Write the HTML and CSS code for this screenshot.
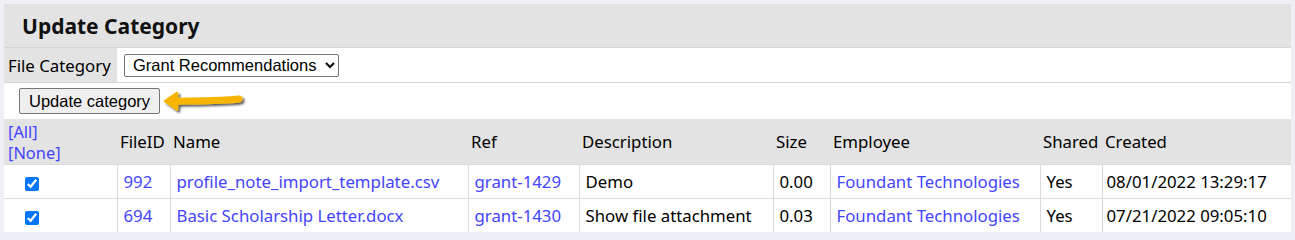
FILE: index.html
```html
<!DOCTYPE html>
<html>
<head>
<meta charset="utf-8">
<title>Update Category</title>
<link rel="stylesheet" href="styles.css">
</head>
<body>
<div class="panel">
  <h2 class="title">Update Category</h2>
  <div class="form-row">
    <div class="label-cell">File Category</div>
    <div class="field-cell">
      <select class="select">
        <option>Grant Recommendations</option>
      </select>
    </div>
  </div>
  <div class="action-row">
    <button class="btn" type="button">Update category</button>
    <svg class="arrow" width="86" height="28" viewBox="0 0 86 28">
      <defs>
        <filter id="sh" x="-20%" y="-50%" width="140%" height="200%">
          <feGaussianBlur in="SourceAlpha" stdDeviation="1.3"/>
          <feOffset dx="1.5" dy="2" result="b"/>
          <feComponentTransfer><feFuncA type="linear" slope="0.65"/></feComponentTransfer>
          <feMerge><feMergeNode/><feMergeNode in="SourceGraphic"/></feMerge>
        </filter>
      </defs>
      <g filter="url(#sh)" fill="#f7b500" stroke="#f7b500" stroke-linejoin="round" stroke-linecap="round">
        <path d="M4 13 L16 5 L16 21.5 Z" stroke-width="2.5"/>
        <path d="M14 13.2 C36 12.8 60 13 78 11" fill="none" stroke-width="7"/>
      </g>
    </svg>
  </div>
  <table class="files">
    <colgroup>
      <col class="c-check"><col class="c-id"><col class="c-name"><col class="c-ref"><col class="c-desc"><col class="c-size"><col class="c-emp"><col class="c-shared"><col class="c-created">
    </colgroup>
    <thead>
      <tr>
        <th class="sel"><a href="#" class="link sel-link">[All]</a><a href="#" class="link sel-link">[None]</a></th>
        <th>FileID</th>
        <th>Name</th>
        <th>Ref</th>
        <th>Description</th>
        <th>Size</th>
        <th>Employee</th>
        <th>Shared</th>
        <th>Created</th>
      </tr>
    </thead>
    <tbody>
      <tr>
        <td class="chk"><input type="checkbox" checked></td>
        <td><a href="#" class="link">992</a></td>
        <td><a href="#" class="link">profile_note_import_template.csv</a></td>
        <td><a href="#" class="link">grant-1429</a></td>
        <td>Demo</td>
        <td>0.00</td>
        <td><a href="#" class="link">Foundant Technologies</a></td>
        <td>Yes</td>
        <td class="date">08/01/2022 13:29:17</td>
      </tr>
      <tr>
        <td class="chk"><input type="checkbox" checked></td>
        <td><a href="#" class="link">694</a></td>
        <td><a href="#" class="link">Basic Scholarship Letter.docx</a></td>
        <td><a href="#" class="link">grant-1430</a></td>
        <td>Show file attachment</td>
        <td>0.03</td>
        <td><a href="#" class="link">Foundant Technologies</a></td>
        <td>Yes</td>
        <td class="date">07/21/2022 09:05:10</td>
      </tr>
    </tbody>
  </table>
</div>
</body>
</html>
```

FILE: styles.css
```css
html, body {
  margin: 0;
  padding: 0;
  background: #eef0f6;
}
body {
  padding: 4px 4px 0 4px;
  font-family: "Noto Sans", "Open Sans", sans-serif;
  font-size: 16.8px;
  color: #000;
}
.panel {
  width: 1287px;
  background: #fff;
}
.title {
  margin: 0;
  height: 44px;
  box-sizing: border-box;
  padding: 8px 0 0 18px;
  font-size: 21px;
  font-weight: bold;
  line-height: 28px;
  background: #e3e3e3;
  border-bottom: 1px solid #d6d6d6;
  color: #111;
}
.form-row {
  display: flex;
  height: 34px;
  border-bottom: 1px solid #d6d6d6;
}
.label-cell {
  width: 113px;
  box-sizing: border-box;
  padding-left: 4px;
  background: #e3e3e3;
  display: flex;
  align-items: center;
}
.field-cell {
  flex: 1;
  display: flex;
  align-items: center;
  padding-left: 7px;
}
.select {
  font-family: "Liberation Sans", Arial, sans-serif;
  font-size: 16.5px;
  height: 23px;
  padding: 0 5px 0 4px;
  border: 1px solid #767676;
  border-radius: 2px;
  background: #fff;
  color: #000;
}
.action-row {
  display: flex;
  align-items: center;
  height: 36px;
  padding-left: 15px;
}
.btn {
  font-family: "Liberation Sans", Arial, sans-serif;
  font-size: 16.5px;
  height: 26px;
  padding: 0 9px;
  border: 1px solid #767676;
  border-radius: 2px;
  background: #efefef;
  color: #000;
}
.arrow {
  display: block;
  margin-left: 1px;
  margin-top: 1px;
}
.files {
  width: 1287px;
  table-layout: fixed;
  border-collapse: collapse;
}
.c-check { width: 113px; }
.c-id { width: 53px; }
.c-name { width: 298px; }
.c-ref { width: 111px; }
.c-desc { width: 194px; }
.c-size { width: 57px; }
.c-emp { width: 210px; }
.c-shared { width: 62px; }
.c-created { width: 189px; }
.files th {
  background: #e3e3e3;
  font-weight: normal;
  text-align: left;
  padding: 0 0 0 3px;
  height: 45px;
  line-height: 20px;
  white-space: nowrap;
}
.files th.sel {
  padding-left: 4px;
}
.sel-link {
  display: block;
  font-size: 16.4px;
  line-height: 21px;
  height: 21px;
}
.files td {
  height: 33px;
  padding: 0 0 0 6px;
  border-top: 1px solid #dadada;
  border-left: 1px solid #dadada;
  white-space: nowrap;
}
.files td.chk {
  border-left: none;
  padding-left: 17px;
}
.files td.chk input {
  margin: 0 0 0 4px;
  width: 14px;
  height: 14px;
  vertical-align: middle;
}
.files td.date {
  padding-left: 4px;
}
.link {
  color: #4444ff;
  text-decoration: none;
}
```
